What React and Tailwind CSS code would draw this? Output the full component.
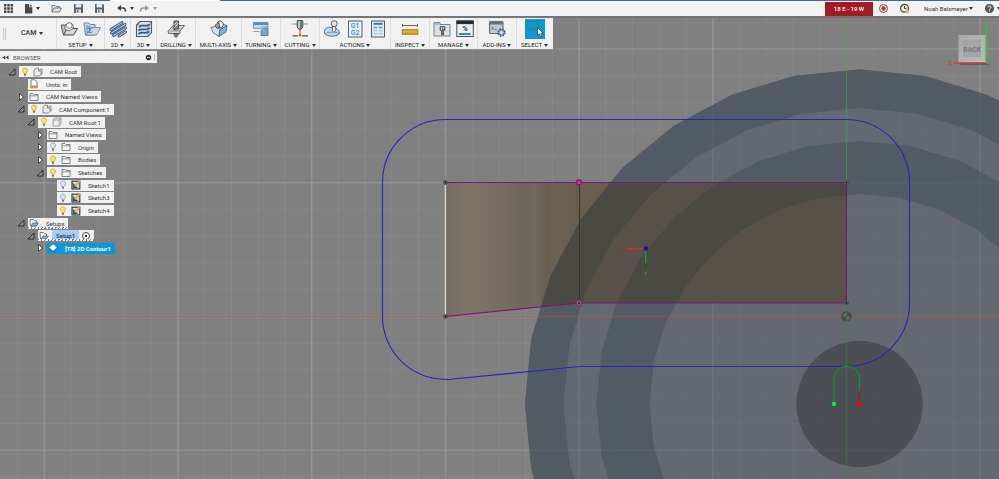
import React from "react";

const CX = 859.5;
const CY = 404;

function ringPoints(radius) {
  return Array.from({ length: 32 }, (_, i) => {
    const a = (i * Math.PI) / 16;
    return `${(CX + radius * Math.sin(a)).toFixed(1)},${(CY - radius * Math.cos(a)).toFixed(1)}`;
  }).join(" ");
}

function ringPath(outer, inner) {
  return `M${ringPoints(outer).split(" ").join("L")}Z M${ringPoints(inner).split(" ").join("L")}Z`;
}

const STEP = 26.74;
const vertical = Array.from({ length: 38 }, (_, i) => i - 31).map((n) => ({ n, at: 846.5 + n * STEP }));
const horizontal = Array.from({ length: 19 }, (_, i) => i - 12).map((n) => ({ n, at: 316.5 + n * STEP }));

const PART = "445.5,182.5 846.5,182.5 846.5,303 579,303 445.5,316.5";

function Viewport() {
  return (
    <svg className="absolute inset-0 h-full w-full" viewBox="0 0 999 479" preserveAspectRatio="xMinYMin slice" aria-label="Model view">
      <defs>
        <linearGradient id="stock" gradientUnits="userSpaceOnUse" x1="445" y1="0" x2="579" y2="0">
          <stop offset="0" stopColor="#6f675b" />
          <stop offset="0.04" stopColor="#786f62" />
          <stop offset="0.17" stopColor="#7e7466" />
          <stop offset="0.45" stopColor="#756d60" />
          <stop offset="0.58" stopColor="#6c6659" />
          <stop offset="0.67" stopColor="#716a5e" />
          <stop offset="0.76" stopColor="#695f50" />
          <stop offset="0.84" stopColor="#6d6252" />
          <stop offset="1" stopColor="#675e50" />
        </linearGradient>
        <linearGradient id="tint" x1="0" y1="0" x2="1" y2="1">
          <stop offset="0" stopColor="#4d5a64" />
          <stop offset="0.25" stopColor="#4f5762" />
          <stop offset="0.5" stopColor="#4d5962" />
          <stop offset="1" stopColor="#4f5762" />
        </linearGradient>
        <clipPath id="partClip"><polygon points={PART} /></clipPath>
      </defs>
      <rect width="999" height="479" fill="#808080" />
      <polygon points={ringPoints(334.5)} fill="#646970" />
      <path d={ringPath(334.5, 296)} fill="url(#tint)" fillRule="evenodd" />
      <path d={ringPath(263, 210)} fill="url(#tint)" fillRule="evenodd" />
      <circle cx={CX} cy={CY} r="63" fill="#474a4f" />
      <g stroke="#ffffff">
        {vertical.map(({ n, at }) => (
          <line key={n} x1={at} x2={at} y1="16" y2="479" strokeWidth={n % 5 ? 1 : 1.5} strokeOpacity={n % 5 ? 0.06 : 0.14} />
        ))}
        {horizontal.map(({ n, at }) => (
          <line key={n} y1={at} y2={at} x1="0" x2="999" strokeWidth={n % 5 ? 1 : 1.5} strokeOpacity={n % 5 ? 0.06 : 0.14} />
        ))}
      </g>
      <polygon points={ringPoints(334.5)} fill="#646970" fillOpacity="0.45" />
      <path d={ringPath(334.5, 296)} fill="url(#tint)" fillRule="evenodd" fillOpacity="0.6" />
      <path d={ringPath(263, 210)} fill="url(#tint)" fillRule="evenodd" fillOpacity="0.6" />
      <circle cx={CX} cy={CY} r="63" fill="#474a4f" fillOpacity="0.7" />

      <polygon points={PART} fill="#6a5e4f" />
      <polygon points="445.5,182.5 579,182.5 579,303 445.5,316.5" fill="url(#stock)" />
      <g clipPath="url(#partClip)">
        <polygon points={ringPoints(334.5)} fill="#575149" />
        <path d={ringPath(334.5, 296)} fill="#4a4944" fillRule="evenodd" />
        <path d={ringPath(263, 210)} fill="#4a4944" fillRule="evenodd" />
      </g>

      <line x1="0" x2="999" y1="316.5" y2="316.5" stroke="#c43c3c" strokeOpacity="0.55" />
      <line x1="846.5" x2="846.5" y1="16" y2="182" stroke="#2f9e3a" strokeOpacity="0.75" />
      <line x1="846.5" x2="846.5" y1="303" y2="479" stroke="#2b7f38" strokeOpacity="0.7" />
      <line x1="445.5" x2="445.5" y1="182" y2="316" stroke="#dad6cc" strokeWidth="1.3" />
      <line x1="579.5" x2="579.5" y1="182" y2="303" stroke="#38342f" />
      <path d="M445.5 182.5H846.5V303H579L445.5 316.5" fill="none" stroke="#7b1877" strokeWidth="1.2" />
      <path
        d="M445.5 119.5H846.5A63 63 0 0 1 909.5 182.5V303A63 63 0 0 1 846.5 366.5H580L451 379.2A63 63 0 0 1 382.5 316.5V182.5A63 63 0 0 1 445.5 119.5Z"
        fill="none" stroke="#2525c0" strokeWidth="1.1"
      />
      <path d="M834 404V379A12.7 12.7 0 0 1 859.4 379V391" fill="none" stroke="#15912a" strokeWidth="1.2" />
      <path d="M859.4 391V404" stroke="#a01c24" strokeWidth="1.2" />
      <circle cx="834" cy="404" r="2.2" fill="#00f51e" />
      <circle cx="859.5" cy="404" r="2.2" fill="#fa0505" />

      {[[445.5, 182.5], [445.5, 316.5], [846.5, 182.5], [846.5, 303]].map(([x, y]) => (
        <g key={`${x}-${y}`}>
          <circle cx={x} cy={y} r="2" fill="#777" stroke="#474747" strokeWidth="0.9" />
          <circle cx={x} cy={y} r="1" fill="#111" />
        </g>
      ))}
      <circle cx="579" cy="182.5" r="2.4" fill="#8e6a86" stroke="#b5057e" strokeWidth="1.7" />
      <circle cx="579" cy="303" r="2.6" fill="#777" stroke="#8b2d78" strokeWidth="1.1" />
      <circle cx="579" cy="303" r="0.9" fill="#222" />

      <circle cx="846.5" cy="316.5" r="5.2" fill="#484b4c" />
      <path d="M846.5 316.5V313A3.5 3.5 0 0 0 843 316.5ZM846.5 316.5V320A3.5 3.5 0 0 0 850 316.5Z" fill="#686c6a" />
      <path d="M846.5 312V321" stroke="#2b7f38" strokeWidth="0.8" />

      <path d="M630 248.7H645" stroke="#c93028" strokeWidth="1.4" />
      <path d="M625.3 248.7L631 247V250.4Z" fill="#e02a20" />
      <path d="M645.7 249V265" stroke="#1ca02a" strokeWidth="1.3" />
      <path d="M645.7 269.5L644 263.5H647.4Z" fill="#12641b" />
      <circle cx="645.7" cy="248.7" r="2.3" fill="#1515cf" />
      <path d="M645.7 246.5A2.2 2.2 0 0 1 647.9 248.7H645.7Z" fill="#101045" />
      <path d="M619.3 247L622.3 250.5M622.3 247L619.3 250.5" stroke="#9c2b26" strokeWidth="0.7" />
      <path d="M644.3 271.6L645.7 273.6L647.1 271.6M645.7 273.6V275.6" fill="none" stroke="#20a92d" strokeWidth="0.9" />
    </svg>
  );
}

function Svg({ size = "h-5 w-5", box = 20, children }) {
  return <svg className={`${size} shrink-0`} viewBox={`0 0 ${box} ${box}`} fill="none" aria-hidden="true">{children}</svg>;
}

function Caret({ tone = "text-[#333]" }) {
  return (
    <svg className={`h-[3px] w-1 shrink-0 ${tone}`} viewBox="0 0 4 3" aria-hidden="true">
      <path d="M0 0H4L2 3Z" fill="currentColor" />
    </svg>
  );
}

/* ---------- toolbar icons ---------- */
const icons = {
  setup: (
    <Svg>
      <path d="M2 6H7L8.5 8H14V15H4Z" fill="#b9bec2" stroke="#4d555c" strokeWidth="0.9" />
      <path d="M4.5 16L8 9.5H18.5L14.5 16Z" fill="#d4d8db" stroke="#41484e" strokeWidth="1" />
      <path d="M6 6.5L10 4L14 5.5V9.5L10 12L6 10Z" fill="#fafafa" stroke="#50585f" strokeWidth="0.8" />
      <circle cx="10.3" cy="6.5" r="2.8" fill="#fff" stroke="#50585f" strokeWidth="0.8" />
    </Svg>
  ),
  folder: (
    <Svg>
      <path d="M2 4H7L8.5 5.5H13V16H3.5Z" fill="#c7d9e6" stroke="#65798a" strokeWidth="0.9" />
      <path d="M4 16L9 8.5H18.5L14.5 16Z" fill="#d3d8dc" stroke="#7a8790" strokeWidth="0.9" />
      <path d="M5 6.5V13.5M5 6.5L10 12.5M5 13.5H10M7.5 6.5V13.5M4 9.5H10.5" stroke="#3f88c4" strokeWidth="0.8" />
    </Svg>
  ),
  twoD: (
    <Svg>
      <path d="M3 10.5L14 3.5M3.5 14L17 5.5M5.5 16.5L17.5 9M11 17L17.5 13" stroke="#2d4c74" strokeWidth="2.8" strokeLinecap="round" />
      <path d="M3 10.5L14 3.5M3.5 14L17 5.5M5.5 16.5L17.5 9M11 17L17.5 13" stroke="#a5c9ec" strokeWidth="1.3" strokeLinecap="round" />
    </Svg>
  ),
  threeD: (
    <Svg>
      <path d="M2.5 6L6 2.5H17.5V13.5L14 17.5H2.5Z" fill="#dfe3e6" stroke="#4f565c" strokeWidth="1.1" />
      <path d="M2.5 6H14V17.5M14 6L17.5 2.5" stroke="#737b82" strokeWidth="0.8" />
      <path d="M5 8C9 5 11 9 16 5.5M4.5 11.5C8 8.5 11 12.5 16 9M4.5 15C8 12 11 15.5 15.5 12.5" stroke="#24588f" strokeWidth="1.7" />
      <path d="M6 8.5C9 6 11 9.6 15 7M6 12C8 10 11 13 15 10.5" stroke="#8fbbe2" strokeWidth="0.8" />
    </Svg>
  ),
  drilling: (
    <Svg>
      <path d="M2 12L7.5 6.5H18.5L14 12V14.5H2.5Z" fill="#d2d6d9" stroke="#5a6167" strokeWidth="0.9" />
      <path d="M2 12H14M14 12L18.5 6.5" stroke="#868d92" strokeWidth="0.7" />
      <ellipse cx="10" cy="9.5" rx="3.4" ry="1.8" fill="#f8f8f8" stroke="#565c61" strokeWidth="0.7" />
      <path d="M8 2H12.5V9.5L8 10.5Z" fill="#858b90" stroke="#34393d" strokeWidth="0.9" />
      <path d="M8.5 8.5L12.5 4M8.5 5.5L11 2.5" stroke="#eee" strokeWidth="0.8" />
      <path d="M8 14.5H12.5L11.5 17L10 18.5L8.5 17Z" fill="#777e83" stroke="#34393d" strokeWidth="0.7" />
    </Svg>
  ),
  multi: (
    <Svg>
      <path d="M2 8.5L8 7L11 10.5L10 17.5L4 13.5Z" fill="#d6dde2" stroke="#566068" strokeWidth="0.8" />
      <path d="M11 10.5L18 6.5L17 13L10 17.5Z" fill="#7db0da" stroke="#485f73" strokeWidth="0.8" />
      <path d="M8 7L13 5L18 6.5L11 10.5Z" fill="#bcd9f0" stroke="#485f73" strokeWidth="0.8" />
      <path d="M8.5 3L12 1.8L14.5 5C14 8 12.3 9.2 10.5 8.4Z" fill="#f5f5f5" stroke="#3f454a" strokeWidth="0.9" />
      <path d="M6 6L10 3.5L11 8L8 9.5Z" fill="#989ea3" stroke="#3f454a" strokeWidth="0.7" />
    </Svg>
  ),
  turning: (
    <Svg>
      <path d="M2.5 3.5H17V8H12L9.5 9.5H2.5Z" fill="#bcd9ef" stroke="#5f84a3" strokeWidth="0.8" />
      <path d="M2.5 3.5H17V6H2.5Z" fill="#4b94cb" />
      <path d="M10 12C10.5 10 12 9 17 9V16.5H10Z" fill="#75aad4" stroke="#446f93" strokeWidth="0.8" />
      <path d="M2.5 12.5H8" stroke="#7a8a96" strokeWidth="0.9" />
    </Svg>
  ),
  cutting: (
    <Svg>
      <path d="M1.5 5H18" stroke="#737a80" strokeWidth="0.8" />
      <path d="M7.2 1.5H12.8V8L11 10.5H9L7.2 8Z" fill="#737b81" stroke="#3b4248" strokeWidth="0.8" />
      <path d="M9 2V9" stroke="#fff" strokeWidth="1.1" />
      <path d="M10 10.5V17" stroke="#e04c26" strokeWidth="1.1" />
      <circle cx="10" cy="16.3" r="1.3" fill="#e6562e" />
      <path d="M2.5 16.8H8M12 16.8H18" stroke="#4e555b" strokeWidth="1.3" />
    </Svg>
  ),
  simulate: (
    <Svg>
      <path d="M2.5 14C1.5 9.5 6 7.5 9 8.5C12 7 17 10 17.5 14C17 18 4 18.5 2.5 14Z" fill="#b9d6ee" stroke="#496783" strokeWidth="0.9" />
      <path d="M4 15C6 12 8 14.5 10 13C13 12 15 15 17 14" stroke="#6698c2" strokeWidth="0.9" />
      <path d="M10.5 6V12C11.5 13.5 13 13 13.7 12V6" fill="#eee" stroke="#4b5157" strokeWidth="0.8" />
      <circle cx="12.2" cy="4.7" r="3" fill="#e2e4e6" stroke="#4b5157" strokeWidth="0.9" />
    </Svg>
  ),
  post: (
    <Svg>
      <rect x="3.5" y="2" width="13.5" height="16" fill="#edf4fa" stroke="#545c63" />
      <text x="10.2" y="9.4" textAnchor="middle" fill="#2b8ad6" fontSize="7" fontWeight="500" fontFamily="Roboto, sans-serif">G1</text>
      <text x="10.2" y="16.3" textAnchor="middle" fill="#2b8ad6" fontSize="7" fontWeight="500" fontFamily="Roboto, sans-serif">G2</text>
    </Svg>
  ),
  sheet: (
    <Svg>
      <rect x="3.5" y="2" width="13" height="16" fill="#e3edf5" stroke="#545c63" />
      <path d="M5.5 4.8H14.5" stroke="#1c83cf" strokeWidth="2" />
      <path d="M5.5 8.5H9.3M10.8 8.5H14.5" stroke="#4b9fdc" strokeWidth="1.4" />
      <path d="M5.5 11.5H9.3M10.8 11.5H14.5M5.5 14.5H9.3M10.8 14.5H14.5" stroke="#a7c6de" strokeWidth="1.6" />
    </Svg>
  ),
  measure: (
    <Svg>
      <path d="M2.5 6.5H17.5M2.5 4.8V8.2M17.5 4.8V8.2" stroke="#555b60" strokeWidth="0.9" />
      <rect x="2.2" y="10.8" width="15.6" height="4.4" fill="#eeb52e" stroke="#8a6721" strokeWidth="0.9" />
      <path d="M5 12.6V15M8 12.6V15M11 12.6V15M14 12.6V15" stroke="#9d7421" strokeWidth="0.6" />
    </Svg>
  ),
  library: (
    <Svg>
      <path d="M2 3.5H8V5.5H18V17H2Z" fill="#dbe0e4" stroke="#6d777f" strokeWidth="0.9" />
      <path d="M2.5 4H7.5V6H2.5Z" fill="#96bedd" />
      <path d="M8 7.5H13V11L11.5 12.5V16H9.5V12.5L8 11Z" fill="#62696e" stroke="#393f43" strokeWidth="0.6" />
      <path d="M9.5 8V11M11.5 8V10" stroke="#f2f2f2" strokeWidth="0.8" />
    </Svg>
  ),
  task: (
    <Svg>
      <rect x="1.8" y="2" width="16.5" height="15.5" fill="#eceff1" stroke="#4c545a" />
      <rect x="1.5" y="1.5" width="17" height="3.6" fill="#252b30" />
      <text x="10" y="12.3" textAnchor="middle" fill="#33383c" fontSize="7.5" fontWeight="700" fontFamily="Roboto, sans-serif">%</text>
      <path d="M4 15H15.5" stroke="#1680cf" strokeWidth="1.8" />
    </Svg>
  ),
  addins: (
    <Svg>
      <rect x="2.5" y="2.5" width="13.5" height="12" rx="0.6" fill="#c3c8cd" stroke="#5e666d" />
      <rect x="2.5" y="2.5" width="13.5" height="3" fill="#6c747b" />
      <path d="M4.5 8L6.5 9.3L4.5 10.6M7.5 10.5H9.5" stroke="#565d63" strokeWidth="0.8" />
      <circle cx="14.5" cy="13.5" r="3.4" stroke="#435a78" strokeWidth="1.6" strokeDasharray="1.6 1.07" />
      <circle cx="14.5" cy="13.5" r="2.7" fill="#b3c7dc" stroke="#435a78" strokeWidth="0.8" />
      <circle cx="14.5" cy="13.5" r="0.9" fill="#f4f4f4" />
    </Svg>
  ),
  select: (
    <Svg>
      <rect width="20" height="20" fill="#0d96d8" />
      <path d="M2 2.5H13V10H2Z" stroke="#2c8a4b" strokeWidth="0.9" />
      <path d="M12.5 8.5V16.5L14.4 14.8L15.6 17.6L17 17L15.8 14.2H18.2Z" fill="#fff" stroke="#333" strokeWidth="0.7" />
    </Svg>
  ),
};

const groups = [
  { label: "SETUP", width: "w-12", icons: ["setup", "folder"] },
  { label: "2D", width: "w-[26px]", icons: ["twoD"] },
  { label: "3D", width: "w-[26px]", icons: ["threeD"] },
  { label: "DRILLING", width: "w-[39px]", icons: ["drilling"] },
  { label: "MULTI-AXIS", width: "w-[46px]", icons: ["multi"] },
  { label: "TURNING", width: "w-[39px]", icons: ["turning"] },
  { label: "CUTTING", width: "w-[39px]", icons: ["cutting"] },
  { label: "ACTIONS", width: "w-[71px]", icons: ["simulate", "post", "sheet"] },
  { label: "INSPECT", width: "w-[39px]", icons: ["measure"] },
  { label: "MANAGE", width: "w-12", icons: ["library", "task"] },
  { label: "ADD-INS", width: "w-[39px]", icons: ["addins"] },
  { label: "SELECT", width: "w-9", icons: ["select"] },
];

function Toolbar() {
  return (
    <nav aria-label="CAM tools" className="flex h-[31px] w-fit bg-[#f1f1f1] pr-px">
      <div className="flex w-14 items-center">
        <span className="ml-[3px] h-3 w-[3px] border-x border-[#c4c4c4]" />
        <button className="ml-[15px] flex items-center gap-[3px] text-[7px] font-medium text-[#333]">CAM <Caret /></button>
      </div>
      {groups.map((g) => (
        <div key={g.label} className={`flex shrink-0 flex-col items-center border-l border-[#dcdcdc] ${g.width}`}>
          <div className="flex h-[22px] items-center justify-center gap-[3px]">
            {g.icons.map((name) => (
              <button key={name} aria-label={name}>{icons[name]}</button>
            ))}
          </div>
          <button className="mt-px flex h-2 items-center gap-0.5 whitespace-nowrap text-[6px] leading-[8px] text-[#222]">{g.label}<Caret /></button>
        </div>
      ))}
    </nav>
  );
}

const floppy = (
  <>
    <path d="M1 1H9L10 2V10H1Z" fill="#59636d" />
    <path d="M2.6 1.2H8.2V4.4H2.6Z" fill="#eef2f5" />
    <path d="M3 6.4H8V10H3Z" fill="#d6dbdf" />
    <path d="M4 7.2H5.4V9.4H4Z" fill="#59636d" />
  </>
);

function TopBar() {
  return (
    <header className="flex h-[17px] items-center border-b-2 border-[#757575] bg-[#f2f2f2] text-[6px] text-[#333]">
      <div className="flex items-center">
        <button aria-label="Apps" className="ml-[3px]">
          <Svg size="h-[11px] w-[11px]" box={11}>
            <path d="M1 1h2.4v2.4H1zM4.3 1h2.4v2.4H4.3zM7.6 1H10v2.4H7.6zM1 4.3h2.4v2.4H1zM4.3 4.3h2.4v2.4H4.3zM7.6 4.3H10v2.4H7.6zM1 7.6h2.4V10H1zM4.3 7.6h2.4V10H4.3zM7.6 7.6H10V10H7.6z" fill="#444" />
          </Svg>
        </button>
        <button aria-label="File" className="ml-[9px] flex items-center gap-0.5">
          <Svg size="h-[11px] w-[11px]" box={11}><path d="M2 1H6V4.2H9.3V10.5H2ZM6.8 1L9.3 3.5H6.8Z" fill="#474747" /></Svg><Caret />
        </button>
        <button aria-label="Open" className="ml-[11px]">
          <Svg size="h-[11px] w-[11px]" box={11}><path d="M1 9V2.5H4L5 3.5H8.5V5M1 9L3 5H10.5L8.5 9Z" fill="#dce3e8" stroke="#65717b" strokeWidth="0.9" /></Svg>
        </button>
        <button aria-label="Save" className="ml-[11px]"><Svg size="h-[11px] w-[11px]" box={11}>{floppy}</Svg></button>
        <button aria-label="Save as" className="ml-[10px]"><Svg size="h-[11px] w-[11px]" box={11}>{floppy}</Svg></button>
        <button aria-label="Undo" className="ml-[11px] flex items-center gap-[3px]">
          <Svg size="h-[11px] w-[11px]" box={11}><path d="M3 5H7C9 5 9.5 6.3 9.5 8.5" stroke="#444" strokeWidth="1.5" /><path d="M1 5L5 2V8Z" fill="#444" /></Svg><Caret />
        </button>
        <button aria-label="Redo" className="ml-[5px] flex items-center gap-[3px]">
          <Svg size="h-[11px] w-[11px]" box={11}><path d="M8 5H4C2 5 1.5 6.3 1.5 8.5" stroke="#999" strokeWidth="1.5" /><path d="M10 5L6 2V8Z" fill="#999" /></Svg><Caret tone="text-[#999]" />
        </button>
      </div>
      <div className="-mr-0.5 ml-auto flex items-center">
        <button className="h-[14px] w-12 bg-[#a21c26] font-medium text-white">18 E - 19 W</button>
        <button aria-label="Record" className="ml-[5px]">
          <Svg size="h-[11px] w-[11px]" box={11}><circle cx="5.5" cy="5.5" r="4" fill="#fff" stroke="#444" strokeWidth="0.9" /><circle cx="5.5" cy="5.5" r="2.3" fill="#e32222" /></Svg>
        </button>
        <button aria-label="Job status" className="ml-[10px]">
          <Svg size="h-[11px] w-[11px]" box={11}><circle cx="5.5" cy="5.3" r="3.9" stroke="#474747" strokeWidth="1.3" /><path d="M5.5 3V5.5H7.5" stroke="#474747" strokeWidth="1" /><circle cx="8" cy="8.5" r="2" fill="#f2b24c" /></Svg>
        </button>
        <button className="ml-[14px] flex w-[49px] items-center justify-between whitespace-nowrap">Noah Balsmeyer<Caret /></button>
        <button aria-label="Help" className="ml-[11px] flex items-center gap-0.5">
          <Svg size="h-[11px] w-[11px]" box={11}>
            <circle cx="5.5" cy="5.5" r="4.5" fill="#555" />
            <path d="M4 4.4C4 2.6 7 2.7 7 4.4C7 5.5 5.5 5.4 5.5 6.7M5.5 7.4V8.4" stroke="#fff" strokeWidth="1" />
          </Svg>
          <Caret />
        </button>
      </div>
    </header>
  );
}

/* ---------- browser tree ---------- */
const Bulb = ({ on }) => (
  <Svg size="h-[10px] w-[10px]" box={10}>
    <path d="M5 1C3 1 2.2 2.6 2.6 4C3 5.1 3.7 5.5 3.8 6.6H6.2C6.3 5.5 7 5.1 7.4 4C7.8 2.6 7 1 5 1Z" fill={on ? "#fbe15a" : "#d3e2fa"} stroke={on ? "#c3a432" : "#7f93c0"} strokeWidth="0.7" />
    <path d="M4 7.4H6M4.3 8.7H5.7" stroke="#555" strokeWidth="0.9" />
    <path d="M4.2 2.6V4" stroke="#fff" strokeWidth="0.8" />
  </Svg>
);

const treeIcons = {
  component: <path d="M1 3L3 1.2H5.5V4H8V7.5L6.5 9H1ZM5.5 4L7 2.2H9V7L8 7.5" fill="#eee" stroke="#5b6066" strokeWidth="0.7" />,
  body: <path d="M1 3L2.8 1H9V7.2L7.2 9H1ZM1 3H7.2V9M7.2 3L9 1" fill="#eee" stroke="#7b8086" strokeWidth="0.7" />,
  folder: <><path d="M1 1.5H4L5 2.5H9V8.5H1Z" fill="#f4f4f4" stroke="#62686e" strokeWidth="0.8" /><path d="M1 3.8H9" stroke="#62686e" strokeWidth="0.7" /></>,
  units: <><path d="M2 0.8H6L8 3V7H2Z" fill="#fff" stroke="#5c6268" strokeWidth="0.8" /><path d="M1 7H9V9.3H1Z" fill="#e29d2c" /></>,
  sketch: <><rect x="1" y="1.2" width="7.8" height="7.8" fill="#cfe0f0" stroke="#2f3b47" strokeWidth="1.2" /><path d="M2 3V8H7Z" fill="#3a4652" /><path d="M3.6 6.4L8.6 1.2" stroke="#efa926" strokeWidth="1.8" /></>,
  setup: <><path d="M1 1.5H4.5L5.5 2.8H7.5V8H1.5Z" fill="#eef2f5" stroke="#5e6972" strokeWidth="0.8" /><path d="M2 8L4 5H9.3L7.5 8Z" fill="#8db7d8" stroke="#405b71" strokeWidth="0.7" /></>,
  contour: <><path d="M5 1.8L9 5L5.5 9L1 5.6Z" fill="#1a4f80" /><path d="M5 1.2L8.8 4.6L5.3 8L1.2 4.8Z" fill="#fff" /></>,
};

const rows = [
  { text: "CAM Root", pad: "pl-2", arrow: "open", bulb: "on", icon: "component" },
  { text: "Units: in", pad: "pl-[17px]", icon: "units" },
  { text: "CAM Named Views", pad: "pl-[17px]", arrow: "closed", icon: "folder" },
  { text: "CAM Component:1", pad: "pl-[17px]", arrow: "open", bulb: "on", icon: "component" },
  { text: "CAM Root:1", pad: "pl-[27px]", arrow: "open", bulb: "on", icon: "body" },
  { text: "Named Views", pad: "pl-9", arrow: "closed", icon: "folder" },
  { text: "Origin", pad: "pl-9", arrow: "closed", bulb: "off", icon: "folder" },
  { text: "Bodies", pad: "pl-9", arrow: "closed", bulb: "on", icon: "folder" },
  { text: "Sketches", pad: "pl-9", arrow: "open", bulb: "on", icon: "folder" },
  { text: "Sketch1", pad: "pl-[46px]", bulb: "off", icon: "sketch" },
  { text: "Sketch3", pad: "pl-[46px]", bulb: "off", icon: "sketch" },
  { text: "Sketch4", pad: "pl-[46px]", bulb: "on", icon: "sketch" },
  { text: "Setups", pad: "pl-[17px]", arrow: "open", icon: "setup", hatch: true },
  { text: "Setup1", pad: "pl-[27px]", arrow: "open", icon: "setup", hatch: true, active: true },
  { text: "[T8] 2D Contour1", pad: "pl-9", arrow: "closed", icon: "contour", selected: true },
];

function Row({ row }) {
  const box = row.selected ? "bg-[#0d96d8] font-bold text-white" : "bg-[#f1f1f1] text-[#333]";
  return (
    <li className={`flex h-[11px] items-center ${row.pad}`}>
      <span className="flex w-[11px] shrink-0">
        {row.arrow === "open" && <Svg size="h-2 w-2" box={8}><path d="M7 1V7H1Z" fill="#8b8b8b" stroke="#222" strokeWidth="0.9" /></Svg>}
        {row.arrow === "closed" && <Svg size="h-2 w-2" box={8}><path d="M2.5 0.6L6.4 4L2.5 7.4Z" fill="#fff" stroke="#333" strokeWidth="0.9" /></Svg>}
      </span>
      <div className={`relative flex h-[11px] items-center whitespace-nowrap pl-px text-[6px] leading-[11px] ${box}`}>
        {row.bulb && <span className="mr-[3px] flex"><Bulb on={row.bulb === "on"} /></span>}
        <Svg size="h-[10px] w-[10px]" box={10}>{treeIcons[row.icon]}</Svg>
        {row.active ? (
          <>
            <span className="ml-[3px] bg-[#a9ccf8] px-1 font-bold text-[#2c4a75]">{row.text}</span>
            <input type="radio" name="active-setup" aria-label="Active setup" defaultChecked className="ml-[3px] mr-1 h-2 w-2 appearance-none rounded-full border border-[#444] bg-[radial-gradient(#222_25%,#fff_35%)]" />
          </>
        ) : (
          <span className="ml-[7px] mr-1">{row.text}</span>
        )}
        {row.hatch && <span className="absolute inset-x-0 bottom-0 h-0.5 bg-[repeating-linear-gradient(120deg,#5c80ad_0_1px,#f1f1f1_1px_3px)]" />}
      </div>
    </li>
  );
}

function Browser() {
  return (
    <aside className="w-[157px]">
      <div className="flex h-3 items-center bg-[#f1f1f1] px-0.5 text-[6px] text-[#555]">
        <button aria-label="Collapse">
          <Svg size="h-[7px] w-[7px]" box={7}><path d="M3.3 1.5V5.5L0.5 3.5ZM6.5 1.5V5.5L3.7 3.5Z" fill="#333" /></Svg>
        </button>
        <span className="ml-1">BROWSER</span>
        <button aria-label="Hide panel" className="ml-auto">
          <Svg size="h-[7px] w-[7px]" box={7}><circle cx="3.5" cy="3.5" r="2.7" fill="#333" /><path d="M2 3.5H5" stroke="#fff" strokeWidth="0.8" /></Svg>
        </button>
        <span className="ml-0.5 h-[7px] w-px bg-[#b5b5b5]" />
      </div>
      <ul className="mt-[3px] flex h-[188px] flex-col justify-between">
        {rows.map((row) => <Row key={row.text} row={row} />)}
      </ul>
    </aside>
  );
}

function ViewCube() {
  return (
    <svg className="absolute right-0 top-5 h-12 w-14" viewBox="0 0 56 48" aria-label="View cube">
      <defs>
        <linearGradient id="cube" x1="0" y1="0" x2="1" y2="1">
          <stop offset="0" stopColor="#a8a8a8" />
          <stop offset="1" stopColor="#bcbcbc" />
        </linearGradient>
      </defs>
      <path d="M14 43.5H44L47 45H18Z" fill="#5d5d5d" />
      <rect x="15.5" y="15" width="27" height="27.5" fill="url(#cube)" />
      <rect x="20" y="20" width="18" height="17" fill="#a4a5a9" />
      <text x="29" y="31.5" textAnchor="middle" fill="#747982" fontSize="7" fontWeight="700" fontFamily="Roboto, sans-serif">BACK</text>
      <path d="M11 43H43" stroke="#c92f32" strokeWidth="1.2" />
      <path d="M43.3 10V43" stroke="#2ed02e" strokeWidth="1.3" />
      <path d="M5 40.5L8.4 45.3M8.4 40.5L5 45.3" stroke="#d63a3a" strokeWidth="1" />
      <path d="M41.6 4.5L43.2 7L44.8 4.5M43.2 7V10" fill="none" stroke="#35bd35" strokeWidth="1" />
    </svg>
  );
}

export default function App() {
  return (
    <div className="relative h-screen w-full overflow-hidden bg-[#808080] font-['Roboto','Liberation_Sans',sans-serif]">
      <Viewport />
      <ViewCube />
      <div className="relative">
        <div className="flex h-px bg-[#466789]">
          <span className="ml-[11%] w-[11%] bg-white" />
        </div>
        <TopBar />
        <Toolbar />
        <div className="pt-0.5"><Browser /></div>
      </div>
    </div>
  );
}
